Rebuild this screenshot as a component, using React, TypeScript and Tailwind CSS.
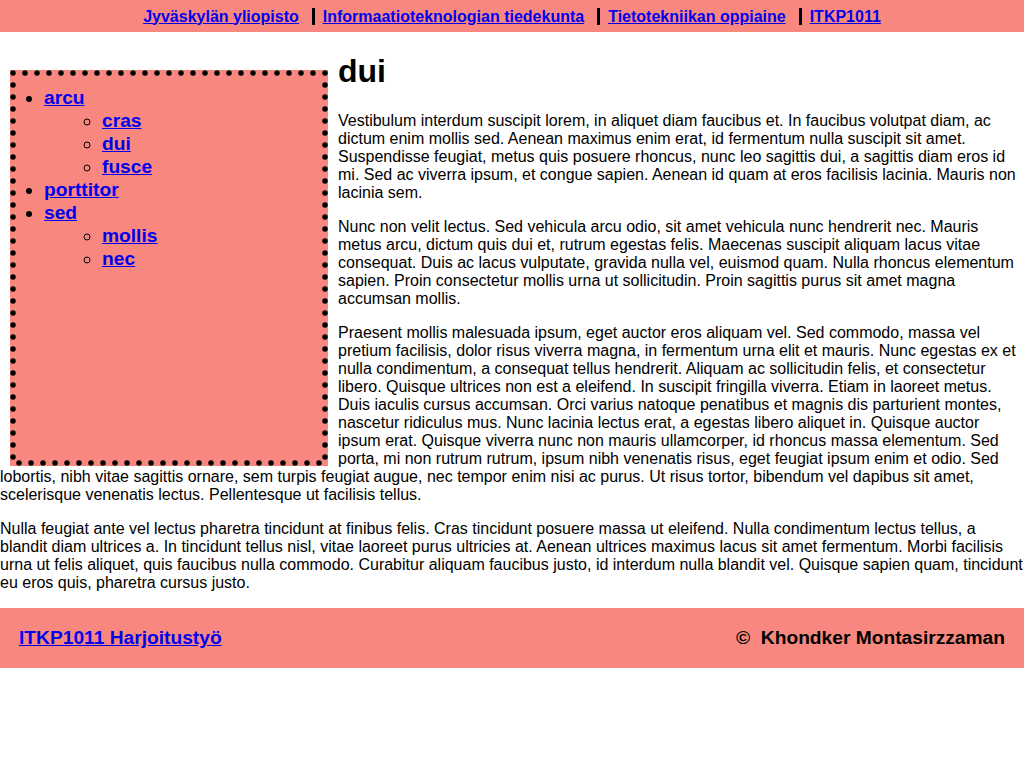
import React from "react";

const link = "text-[#0000ee] underline font-bold";

export default function App() {
  const nav = ["Jyväskylän yliopisto", "Informaatioteknologian tiedekunta", "Tietotekniikan oppiaine", "ITKP1011"];
  return (
    <div className="font-['Liberation_Sans',Arial,sans-serif] text-black text-[16px] leading-[normal] bg-white">
      <header className="h-[32px] bg-[#f8887f] flex items-center justify-center">
        {nav.map((n, i) => (
          <span
            key={n}
            className={
              i === 0
                ? "leading-[17px]"
                : "ml-[13px] border-l-[3px] border-black pl-[8px] leading-[17px]"
            }
          >
            <a href="#" className={link}>{n}</a>
          </span>
        ))}
      </header>
      <div className="flow-root">
        <aside className="relative float-left mt-[38px] ml-[10px] mr-[10px] w-[318px] h-[396px] border-[6px] border-transparent bg-[#f8887f] pt-[10px] text-[19.2px] leading-[23px] font-bold">
          <svg
            className="absolute -left-[6px] -top-[6px] pointer-events-none"
            width="318"
            height="396"
            viewBox="0 0 318 396"
          >
            <rect
              x="3"
              y="3"
              width="312"
              height="390"
              fill="none"
              stroke="#000"
              strokeWidth="5.5"
              strokeDasharray="0 12"
              strokeLinecap="round"
            />
          </svg>
          <ul className="list-disc pl-[28px]">
            <li>
              <a href="#" className={link}>arcu</a>
              <ul className="list-[circle] pl-[58px]">
                <li><a href="#" className={link}>cras</a></li>
                <li><a href="#" className={link}>dui</a></li>
                <li><a href="#" className={link}>fusce</a></li>
              </ul>
            </li>
            <li><a href="#" className={link}>porttitor</a></li>
            <li>
              <a href="#" className={link}>sed</a>
              <ul className="list-[circle] pl-[58px]">
                <li><a href="#" className={link}>mollis</a></li>
                <li><a href="#" className={link}>nec</a></li>
              </ul>
            </li>
          </ul>
        </aside>
        <h1 className="text-[32px] font-bold my-[21.44px]">dui</h1>
        <p className="my-[16px]">
          Vestibulum interdum suscipit lorem, in aliquet diam faucibus et. In faucibus volutpat diam, ac dictum enim mollis sed. Aenean maximus enim erat, id fermentum nulla suscipit sit amet. Suspendisse feugiat, metus quis posuere rhoncus, nunc leo sagittis dui, a sagittis diam eros id mi. Sed ac viverra ipsum, et congue sapien. Aenean id quam at eros facilisis lacinia. Mauris non lacinia sem.
        </p>
        <p className="my-[16px]">
          Nunc non velit lectus. Sed vehicula arcu odio, sit amet vehicula nunc hendrerit nec. Mauris metus arcu, dictum quis dui et, rutrum egestas felis. Maecenas suscipit aliquam lacus vitae consequat. Duis ac lacus vulputate, gravida nulla vel, euismod quam. Nulla rhoncus elementum sapien. Proin consectetur mollis urna ut sollicitudin. Proin sagittis purus sit amet magna accumsan mollis.
        </p>
        <p className="my-[16px]">
          Praesent mollis malesuada ipsum, eget auctor eros aliquam vel. Sed commodo, massa vel pretium facilisis, dolor risus viverra magna, in fermentum urna elit et mauris. Nunc egestas ex et nulla condimentum, a consequat tellus hendrerit. Aliquam ac sollicitudin felis, et consectetur libero. Quisque ultrices non est a eleifend. In suscipit fringilla viverra. Etiam in laoreet metus. Duis iaculis cursus accumsan. Orci varius natoque penatibus et magnis dis parturient montes, nascetur ridiculus mus. Nunc lacinia lectus erat, a egestas libero aliquet in. Quisque auctor ipsum erat. Quisque viverra nunc non mauris ullamcorper, id rhoncus massa elementum. Sed porta, mi non rutrum rutrum, ipsum nibh venenatis risus, eget feugiat ipsum enim et odio. Sed lobortis, nibh vitae sagittis ornare, sem turpis feugiat augue, nec tempor enim nisi ac purus. Ut risus tortor, bibendum vel dapibus sit amet, scelerisque venenatis lectus. Pellentesque ut facilisis tellus.
        </p>
        <p className="my-[16px]">
          Nulla feugiat ante vel lectus pharetra tincidunt at finibus felis. Cras tincidunt posuere massa ut eleifend. Nulla condimentum lectus tellus, a blandit diam ultrices a. In tincidunt tellus nisl, vitae laoreet purus ultricies at. Aenean ultrices maximus lacus sit amet fermentum. Morbi facilisis urna ut felis aliquet, quis faucibus nulla commodo. Curabitur aliquam faucibus justo, id interdum nulla blandit vel. Quisque sapien quam, tincidunt eu eros quis, pharetra cursus justo.
        </p>
      </div>
      <footer className="h-[60px] bg-[#f8887f] flex items-center justify-between px-[19px] text-[19.2px] font-bold">
        <a href="#" className={link}>ITKP1011 Harjoitustyö</a>
        <span>{"©\u00a0 Khondker Montasirzzaman"}</span>
      </footer>
    </div>
  );
}
